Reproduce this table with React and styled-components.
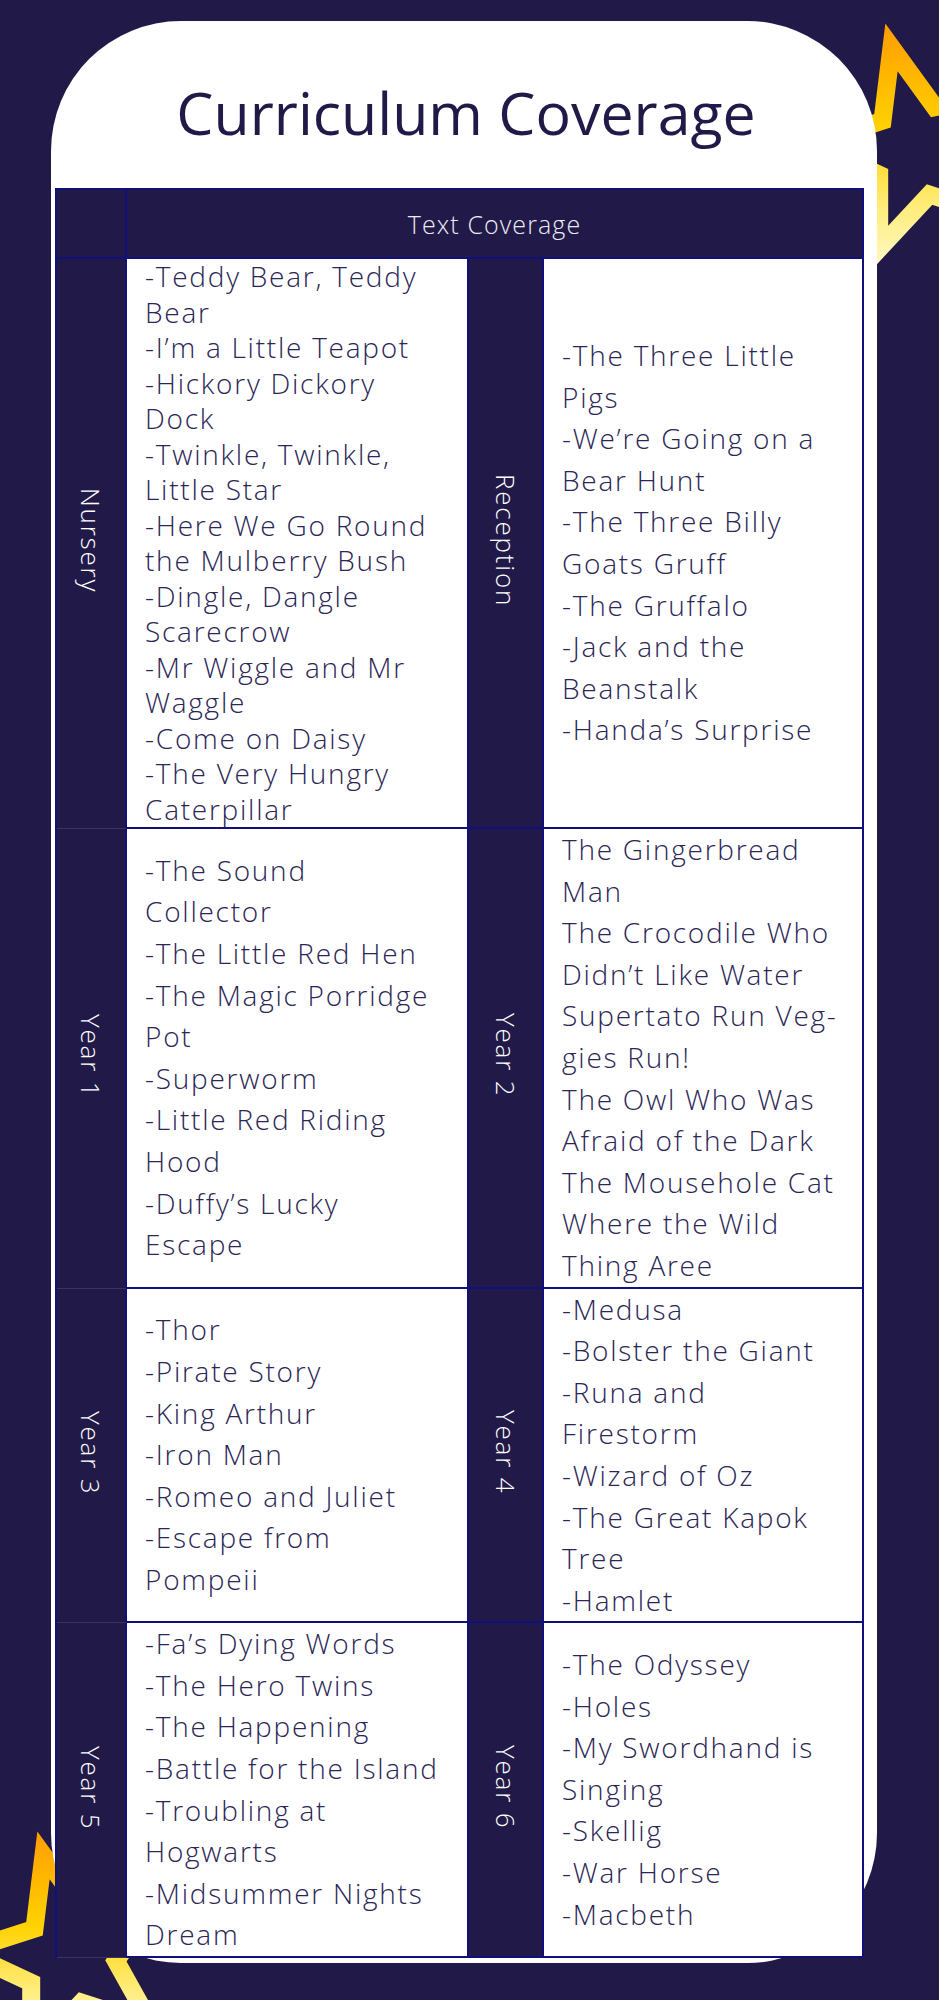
import React from 'react'
import styled, { createGlobalStyle } from 'styled-components'

const GlobalStyle = createGlobalStyle`
    body {
        margin: 0;
        background: #211a48;
        font-family: 'Open Sans', 'Liberation Sans', sans-serif;
    }
`

const Page = styled.div`
    position: relative;
    min-height: 2000px;
    padding: 21px 0 0 51px;
    box-sizing: border-box;
    overflow: hidden;
`

const Decor = styled.svg`
    position: absolute;
    left: 0;
    top: 0;
    width: 939px;
    height: 2000px;
    pointer-events: none;
`

const Card = styled.div`
    position: relative;
    width: 826px;
    height: 1942px;
    padding: 0 0 0 4px;
    box-sizing: border-box;
    background: #fff;
    border-radius: 130px;
`

const Title = styled.h1`
    margin: 0;
    padding-top: 51px;
    height: 167px;
    box-sizing: border-box;
    text-align: center;
    font-size: 59px;
    font-weight: 400;
    line-height: 80px;
    color: #211a48;
`

const Table = styled.table`
    width: 807px;
    table-layout: fixed;
    border-collapse: separate;
    border-spacing: 0;
    border-top: 2px solid #10107a;
    border-left: 2px solid #10107a;
`

const HeadCell = styled.th`
    height: 67px;
    padding: 0;
    background: #211a48;
    border-right: 2px solid #10107a;
    border-bottom: 2px solid #10107a;
    color: #ecebf5;
    font-size: 25px;
    font-weight: 300;
    letter-spacing: 1.1px;
`

const LabelCell = styled.td`
    padding: 0;
    background: #211a48;
    text-align: center;
    vertical-align: middle;
    border-right: 2px solid #10107a;
    border-bottom: ${p => (p.$first ? '1px solid #3a3462' : '2px solid #10107a')};
`

const Label = styled.span`
    display: inline-block;
    writing-mode: vertical-rl;
    color: #fff;
    font-size: 26px;
    font-weight: 300;
    letter-spacing: 1.8px;
`

const TextCell = styled.td`
    padding: 0 6px 0 18px;
    background: #fff;
    vertical-align: middle;
    border-right: 2px solid #10107a;
    border-bottom: 2px solid #10107a;
    color: #2b2656;
    font-size: 28px;
    font-weight: 300;
    letter-spacing: 1.75px;
    line-height: ${p => (p.$tight ? '35.5px' : '41.6px')};
    white-space: pre-line;
`

const rows = [
    {
        left: {
            label: 'Nursery',
            tight: true,
            text: `-Teddy Bear, Teddy
Bear
-I’m a Little Teapot
-Hickory Dickory
Dock
-Twinkle, Twinkle,
Little Star
-Here We Go Round
the Mulberry Bush
-Dingle, Dangle
Scarecrow
-Mr Wiggle and Mr
Waggle
-Come on Daisy
-The Very Hungry
Caterpillar`,
        },
        right: {
            label: 'Reception',
            text: `-The Three Little
Pigs
-We’re Going on a
Bear Hunt
-The Three Billy
Goats Gruff
-The Gruffalo
-Jack and the
Beanstalk
-Handa’s Surprise`,
        },
    },
    {
        left: {
            label: 'Year 1',
            text: `-The Sound
Collector
-The Little Red Hen
-The Magic Porridge
Pot
-Superworm
-Little Red Riding
Hood
-Duffy’s Lucky
Escape`,
        },
        right: {
            label: 'Year 2',
            text: `The Gingerbread
Man
The Crocodile Who
Didn’t Like Water
Supertato Run Veg-
gies Run!
The Owl Who Was
Afraid of the Dark
The Mousehole Cat
Where the Wild
Thing Aree`,
        },
    },
    {
        left: {
            label: 'Year 3',
            text: `-Thor
-Pirate Story
-King Arthur
-Iron Man
-Romeo and Juliet
-Escape from
Pompeii`,
        },
        right: {
            label: 'Year 4',
            text: `-Medusa
-Bolster the Giant
-Runa and
Firestorm
-Wizard of Oz
-The Great Kapok
Tree
-Hamlet`,
        },
    },
    {
        left: {
            label: 'Year 5',
            text: `-Fa’s Dying Words
-The Hero Twins
-The Happening
-Battle for the Island
-Troubling at
Hogwarts
-Midsummer Nights
Dream`,
        },
        right: {
            label: 'Year 6',
            text: `-The Odyssey
-Holes
-My Swordhand is
Singing
-Skellig
-War Horse
-Macbeth`,
        },
    },
]

// 5 point star outline, angle of first tip in degrees
const starPoints = (cx, cy, R, r, start) => {
    const pts = []
    for (let i = 0; i < 10; i++) {
        const a = ((start + i * 36) * Math.PI) / 180
        const rad = i % 2 === 0 ? R : r
        pts.push(`${(cx + rad * Math.cos(a)).toFixed(1)},${(cy + rad * Math.sin(a)).toFixed(1)}`)
    }
    return pts.join(' ')
}

const Stars = () => (
    <Decor viewBox="0 0 939 2000">
        <defs>
            <linearGradient id="starTop" gradientUnits="userSpaceOnUse" x1="0" y1="25" x2="0" y2="275">
                <stop offset="0" stopColor="#ff9d00" />
                <stop offset="0.42" stopColor="#ffd200" />
                <stop offset="0.72" stopColor="#ffec78" />
                <stop offset="1" stopColor="#fffbd2" />
            </linearGradient>
            <linearGradient id="starBottom" gradientUnits="userSpaceOnUse" x1="0" y1="1832" x2="0" y2="2040">
                <stop offset="0" stopColor="#ff9d00" />
                <stop offset="0.45" stopColor="#ffd200" />
                <stop offset="0.75" stopColor="#ffec78" />
                <stop offset="1" stopColor="#fffbd2" />
            </linearGradient>
        </defs>
        <polygon
            points={starPoints(918, 150, 106, 46, 255.5)}
            fill="none"
            stroke="url(#starTop)"
            strokeWidth="18"
            strokeLinejoin="miter"
            strokeMiterlimit="10"
        />
        <polygon
            points={starPoints(70, 1958, 106, 46, 255.5)}
            fill="none"
            stroke="url(#starBottom)"
            strokeWidth="18"
            strokeLinejoin="miter"
            strokeMiterlimit="10"
        />
    </Decor>
)

const App = () => {
    return (
        <Page>
            <GlobalStyle />
            <Stars />
            <Card>
                <Title>Curriculum Coverage</Title>
                <Table>
                    <colgroup>
                        <col style={{ width: 70 }} />
                        <col style={{ width: 342 }} />
                        <col style={{ width: 75 }} />
                        <col style={{ width: 320 }} />
                    </colgroup>
                    <thead>
                        <tr>
                            <HeadCell />
                            <HeadCell colSpan={3}>Text Coverage</HeadCell>
                        </tr>
                    </thead>
                    <tbody>
                        {rows.map((row) => (
                            <tr key={row.left.label}>
                                <LabelCell $first>
                                    <Label>{row.left.label}</Label>
                                </LabelCell>
                                <TextCell $tight={row.left.tight}>{row.left.text}</TextCell>
                                <LabelCell>
                                    <Label>{row.right.label}</Label>
                                </LabelCell>
                                <TextCell>{row.right.text}</TextCell>
                            </tr>
                        ))}
                    </tbody>
                </Table>
            </Card>
        </Page>
    )
}

export default App
